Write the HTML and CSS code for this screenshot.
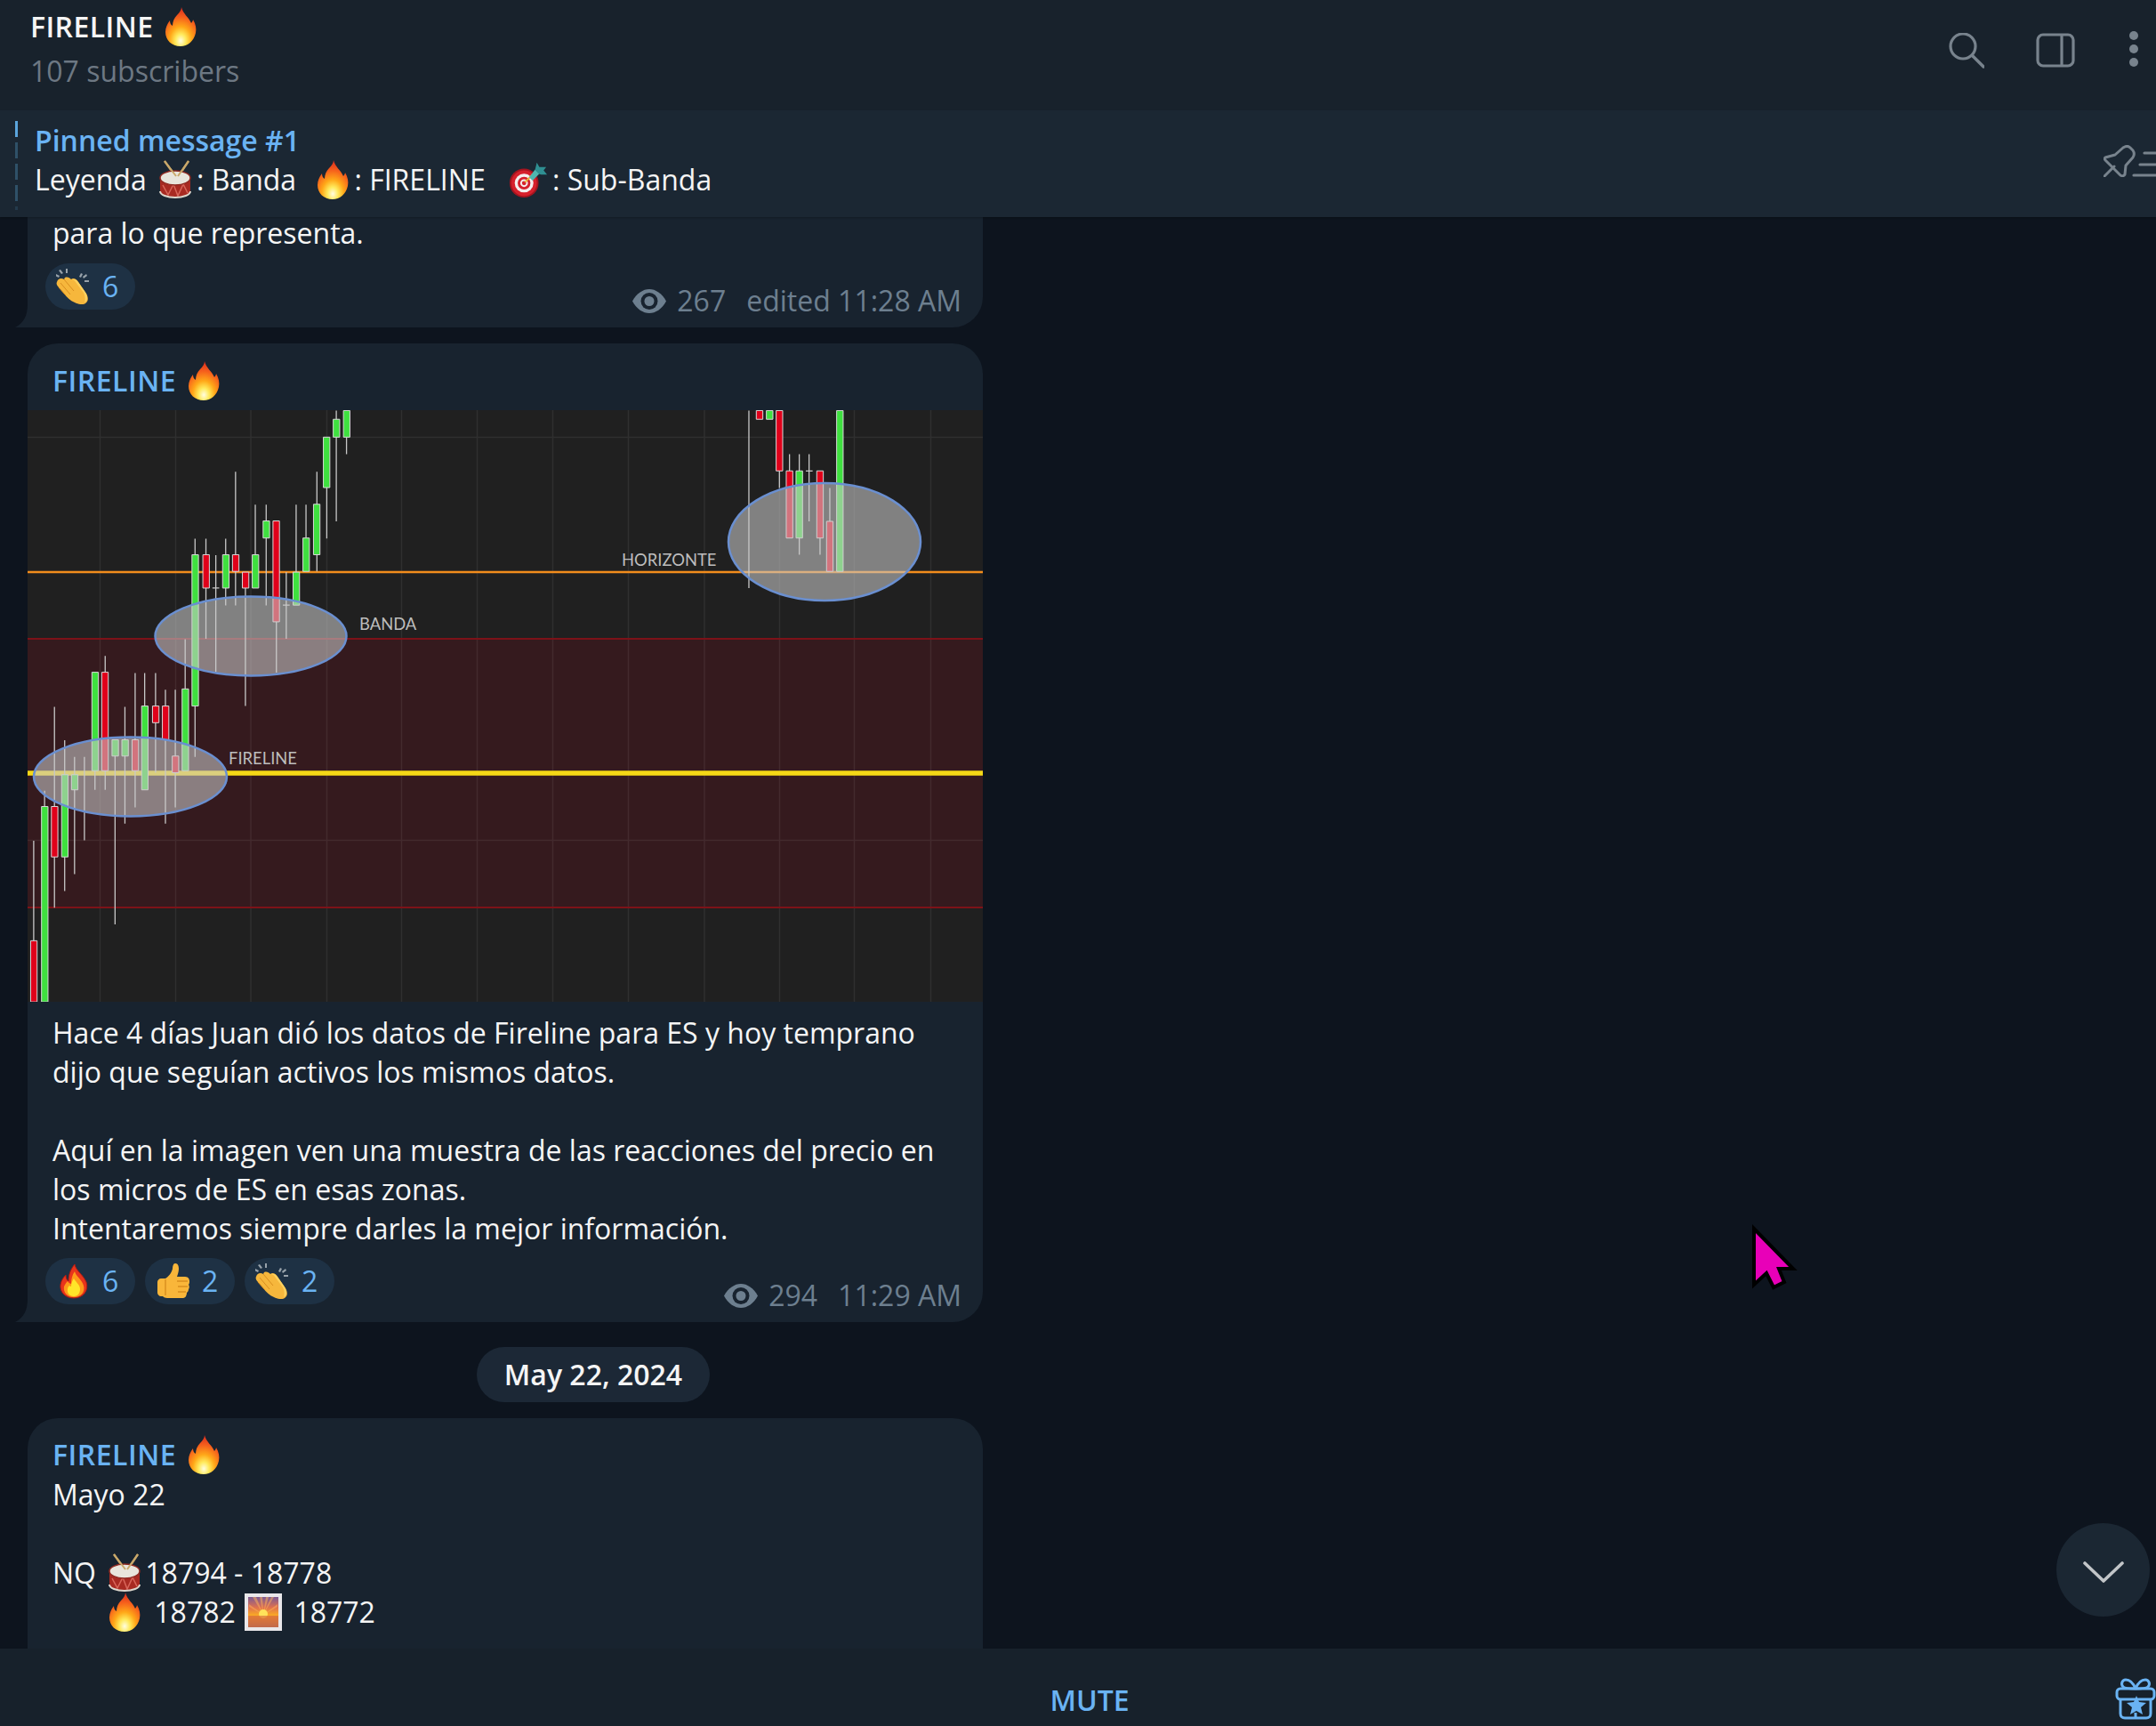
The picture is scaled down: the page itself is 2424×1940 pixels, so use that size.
FILE: index.html
```html
<!DOCTYPE html>
<html lang="en">
<head>
    <meta charset="UTF-8">
    <meta name="viewport" content="width=device-width, initial-scale=1.0">
    <title>FIRELINE</title>
    <link rel="stylesheet" href="styles.css">
</head>
<body>
    <!-- emoji drawings, reused below -->
    <svg class="defs" aria-hidden="true">
        <defs>
            <radialGradient id="flame" cx="0.5" cy="0.86" r="0.86">
                <stop offset="0" stop-color="#fffde0"/>
                <stop offset="0.2" stop-color="#ffea5c"/>
                <stop offset="0.42" stop-color="#ffa818"/>
                <stop offset="0.7" stop-color="#f6601c"/>
                <stop offset="1" stop-color="#d8281f"/>
            </radialGradient>
            <linearGradient id="sky" x1="0" y1="0" x2="0" y2="1">
                <stop offset="0" stop-color="#7b5a94"/>
                <stop offset="0.35" stop-color="#e0714e"/>
                <stop offset="0.6" stop-color="#f9a825"/>
                <stop offset="0.68" stop-color="#ee8a2e"/>
                <stop offset="1" stop-color="#8a5a72"/>
            </linearGradient>
            <symbol id="e-fire" viewBox="0 0 44 44">
                <path fill="url(#flame)" d="M23 0c2 8 8 11 11 18 1-1 2-3 2-4 3 5 4 10 3 15-2 9-9 15-17 15-10 0-17-7-17-16 0-5 2-9 5-13 0 3 1 5 3 6 0-5 2-9 5-12 3-3 5-6 5-9z"/>
            </symbol>
            <symbol id="e-fire-small" viewBox="0 0 40 40">
                <path fill="#e8341c" stroke="#a81c14" stroke-width="1" d="M21 1c1 7 9 11 13 20 3 9-3 18-14 18C10 39 4 32 5 24c1-5 3-8 6-11 0 3 1 6 3 7 0-7 2-13 7-19z"/>
                <path fill="#ff9a1a" d="M21 9c1 5 8 9 10 16 2 7-3 13-11 13S8 32 9 26c1-2 2-4 4-6 1 2 3 3 4 3 0-5 1-10 4-14z"/>
                <path fill="#ffe629" d="M20 17c2 4 7 7 7 12 0 5-3 8-7 8s-8-3-7-8c0-2 1-3 2-4 1 1 2 1 2 1 0-3 1-6 3-9z"/>
            </symbol>
            <symbol id="e-drum" viewBox="0 0 44 44">
                <path d="M10 1l13 18M37 1L25 19" stroke="#c9a86a" stroke-width="2.400" fill="none"/>
                <path fill="#a82a22" d="M5 20v15c0 4 8 7 17 7s17-3 17-7V20z"/>
                <path fill="none" stroke="#d9665a" stroke-width="1.500" d="M8 28l6 11 6-12 5 13 6-13 5 10"/>
                <path fill="none" stroke="#dcd6cc" stroke-width="2" d="M5 35c0 4 8 7 17 7s17-3 17-7"/>
                <ellipse cx="22" cy="20" rx="17" ry="8" fill="#e9e5dc" stroke="#8f2a22" stroke-width="1.500"/>
                <path d="M10 1l13 17M37 1L25 18" stroke="#c9a86a" stroke-width="2" fill="none"/>
            </symbol>
            <symbol id="e-dart" viewBox="0 0 46 44">
                <circle cx="18" cy="26" r="17" fill="#a5141f"/>
                <circle cx="18" cy="26" r="15" fill="#d6202c"/>
                <circle cx="18" cy="26" r="11" fill="#f4eeee"/>
                <circle cx="18" cy="26" r="7.500" fill="#d6202c"/>
                <circle cx="18" cy="26" r="4.500" fill="#f4eeee"/>
                <circle cx="18" cy="26" r="2.500" fill="#d6202c"/>
                <path d="M19 25l9-9" stroke="#e8b33a" stroke-width="2.200"/>
                <path fill="#4fb6b0" d="M24 19l7-9 5 5-8 8z"/>
                <path fill="#2f8f92" d="M31 10l2-8 3 5 8 0-3 4 4 5-7 0-3-1z"/>
            </symbol>
            <symbol id="e-clap" viewBox="0 0 40 40">
                <path fill="#98a2aa" d="M5 1l3 4-2 1-3-4zM11 0h2v5h-2zM0 6l4 2-1 2-4-2zM28 5l2 1-2 4-2-1zM34 6l1 2-4 3-1-2zM37 13v2h-5v-2z"/>
                <path fill="#f6b73c" d="M1 15c1-4 5-5 8-3l1-2c3-1 5 0 7 2l2-1c3 0 5 2 6 4l9 13c3 5 2 9-1 11-3 2-8 1-12-1-5-2-9-6-12-10l-6-7C1 19 0 17 1 15z"/>
                <path fill="#fcd160" d="M17 12c2 0 4 1 5 3l9 12c2 4 2 8 1 11 2-1 3-3 3-5 0-3-1-5-3-8l-7-10c-2-3-5-4-8-3z"/>
                <path fill="none" stroke="#d98e1f" stroke-width="1" d="M9 12l11 13M5 16l11 13M3 21l8 9"/>
            </symbol>
            <symbol id="e-thumb" viewBox="0 0 40 40">
                <path fill="#f9b63a" d="M2 21c0-2 2-4 4-4h5c3-2 7-6 8-11 0-3 1-6 3-6 3 0 4 3 4 6 0 3-1 6-2 9h9c4 0 5 3 5 5 0 1 0 3-1 4 1 1 1 4 0 5 0 2-1 3-2 4 0 2-1 6-4 6H13c-2 0-4-1-5-2H6c-2 0-4-2-4-4z"/>
                <path fill="none" stroke="#d98e1f" stroke-width="1.400" d="M24 20h12M25 26h11M25 32h9M11 18v18"/>
            </symbol>
            <symbol id="e-sunrise" viewBox="0 0 44 44">
                <rect x="1" y="1" width="42" height="42" fill="#e9e7ea"/>
                <rect x="5" y="5" width="34" height="34" fill="url(#sky)"/>
                <path fill="#ffb45a" opacity="0.5" d="M22 25L10 5h4zM22 25L18 5h3zM22 25l3-20h3zM22 25L34 5h-3zM22 25L6 13v3zM22 25l16-12v3z"/>
                <circle cx="22" cy="24" r="5" fill="#ffe25a"/>
                <rect x="5" y="26" width="34" height="13" fill="#d9703c" opacity="0.7"/>
            </symbol>
            <symbol id="i-eye" viewBox="0 0 38 27">
                <path fill="#6d7f8f" d="M0 13.500C5 4.500 12 0 19 0s14 4.500 19 13.500C33 22.500 26 27 19 27S5 22.500 0 13.500z"/>
                <circle cx="19" cy="13.500" r="9.500" fill="#18232f"/>
                <circle cx="19" cy="13.500" r="5.500" fill="#6d7f8f"/>
            </symbol>
        </defs>
    </svg>

    <div class="app">
        <header class="topbar">
            <div class="channel">
                <div class="channel-name">FIRELINE <svg class="emoji"><use href="#e-fire"/></svg></div>
                <div class="channel-subs">107 subscribers</div>
            </div>
            <div class="top-icons">
                <svg class="icon-search" width="40" height="40" viewBox="0 0 40 40"><circle cx="16" cy="15" r="14" fill="none" stroke="#78838d" stroke-width="3.200"/><path d="M27 26l12 12" stroke="#78838d" stroke-width="3.400" stroke-linecap="round"/></svg>
                <svg class="icon-side" width="44" height="39" viewBox="0 0 44 39"><rect x="2" y="2" width="40" height="35" rx="6" fill="none" stroke="#78838d" stroke-width="3.200"/><path d="M29 2v35" stroke="#78838d" stroke-width="3.200"/></svg>
                <svg class="icon-dots" width="10" height="40" viewBox="0 0 10 40"><circle cx="5" cy="5" r="5" fill="#78838d"/><circle cx="5" cy="20" r="5" fill="#78838d"/><circle cx="5" cy="35" r="5" fill="#78838d"/></svg>
            </div>
        </header>

        <div class="pinned">
            <div class="pin-marks">
                <span class="on"></span><span></span><span></span><span></span><span class="last"></span>
            </div>
            <div class="pin-text">
                <div class="pin-title">Pinned message #1</div>
                <div class="pin-body">Leyenda <svg class="emoji e-drum-pin"><use href="#e-drum"/></svg>: Banda <svg class="emoji e-fire-pin"><use href="#e-fire"/></svg>: FIRELINE <svg class="emoji e-dart-pin"><use href="#e-dart"/></svg>: Sub-Banda</div>
            </div>
            <svg class="pin-icon" width="59" height="36" viewBox="0 0 59 36">
                <path fill="none" stroke="#78838d" stroke-width="3" stroke-linejoin="round" d="M2 14l11-3 9-8c3-2 6-2 8 0l3 3c2 3 2 5 0 8l-8 9-1 10c-1 2-3 2-5 1L2 17c-1-1-1-2 0-3z"/>
                <path d="M1 35l11-11" stroke="#78838d" stroke-width="3" stroke-linecap="round"/>
                <path d="M46 9h13M41 22h18M34 34h25" stroke="#78838d" stroke-width="3.200" stroke-linecap="round"/>
            </svg>
        </div>

        <main class="chat">
            <article class="bubble bubble-cut">
                <p class="msg-text">para lo que representa.</p>
                <div class="msg-foot">
                    <div class="reactions">
                        <span class="reaction"><svg class="emoji-small"><use href="#e-clap"/></svg>6</span>
                    </div>
                    <div class="meta">
                        <svg class="eye"><use href="#i-eye"/></svg>
                        <span>267</span>
                        <span class="meta-time">edited 11:28 AM</span>
                    </div>
                </div>
                <svg class="tail" width="14" height="26" viewBox="0 0 14 26"><path d="M14 0c0 12-4 21-14 26h14z"/></svg>
            </article>

            <article class="bubble">
                <div class="msg-name">FIRELINE <svg class="emoji"><use href="#e-fire"/></svg></div>
                <svg class="chart" width="1074" height="665" viewBox="0 0 1074 665">
                    <rect width="1074" height="665" fill="#202020"/>
                    <rect y="257" width="1074" height="302" fill="#351a1e"/>
                    <path class="grid" d="M81.500 0v665M166.500 0v665M251 0v665M336.500 0v665M420.500 0v665M505.500 0v665M590.500 0v665M675.500 0v665M761 0v665M845.500 0v665M929.500 0v665M1015.500 0v665M0 30.500h1074M0 483.500h1074"/>
                    <path class="band-line" d="M0 257h1074M0 559h1074"/>
                    <path class="line-orange" d="M0 182h1074"/>
                    <path class="line-yellow" d="M0 408h1074"/>

                    <!-- left cluster, coordinates read off the picture -->
                    <g transform="translate(-31 -21) scale(.3827 .4464)">
                        <path class="wick" d="M99 1131V1383M131 1005V1045M160 794V1300M190 878V1258M219 920V1215M248 920V1130M279 955V1003M309 666V1003M338 918V1342M367 794V1088M397 709V1047M425 709V792M457 709V960M486 751V1088M515 751V1047M544 624V749M573 371V920M605 371V623M634 412V707M663 371V539M692 202V539M721 495V792M750 285V411M782 285V539M812 580V708M841 455V623M870 285V455M899 285V369M931 202V453M960 242V370M988 48V327M1018 115V158M624 495H644M831 538H851"/>
                        <g class="down">
                            <rect x="90" y="1383" width="19" height="154"/><rect x="151" y="1045" width="19" height="127"/><rect x="299" y="707" width="19" height="248"/><rect x="388" y="877" width="19" height="78"/><rect x="448" y="792" width="19" height="42"/><rect x="477" y="792" width="19" height="85"/><rect x="506" y="918" width="19" height="42"/><rect x="596" y="411" width="19" height="84"/><rect x="683" y="411" width="19" height="42"/><rect x="712" y="455" width="19" height="40"/><rect x="802" y="326" width="19" height="254"/>
                        </g>
                        <g class="up">
                            <rect x="122" y="1045" width="19" height="492"/><rect x="181" y="965" width="19" height="207"/><rect x="210" y="965" width="19" height="38"/><rect x="270" y="707" width="19" height="248"/><rect x="329" y="877" width="19" height="41"/><rect x="358" y="877" width="19" height="41"/><rect x="416" y="792" width="19" height="211"/><rect x="535" y="749" width="19" height="206"/><rect x="564" y="411" width="19" height="381"/><rect x="654" y="411" width="19" height="84"/><rect x="741" y="411" width="19" height="84"/><rect x="773" y="326" width="19" height="43"/><rect x="861" y="455" width="19" height="83"/><rect x="890" y="369" width="19" height="84"/><rect x="921" y="284" width="19" height="127"/><rect x="950" y="115" width="19" height="127"/><rect x="979" y="70" width="19" height="45"/><rect x="1009" y="48" width="19" height="67"/>
                        </g>
                    </g>

                    <!-- right cluster -->
                    <g transform="translate(569 -21) scale(.3333 .4464)">
                        <path class="wick" d="M726 48V495M829 200V243M863 158V200M896 158V411M929 158V327M966 369V411M999 243V327M918 200H941"/>
                        <g class="down">
                            <rect x="751" y="48" width="22" height="22"/><rect x="818" y="48" width="22" height="152"/><rect x="852" y="200" width="22" height="169"/><rect x="955" y="200" width="22" height="169"/><rect x="988" y="327" width="22" height="126"/>
                        </g>
                        <g class="up">
                            <rect x="785" y="48" width="22" height="22"/><rect x="885" y="200" width="22" height="169"/><rect x="1022" y="48" width="22" height="405"/>
                        </g>
                    </g>

                    <ellipse class="zone" cx="115.500" cy="412" rx="108.500" ry="44.500"/>
                    <ellipse class="zone" cx="251" cy="254" rx="107.500" ry="44.500"/>
                    <ellipse class="zone" cx="896" cy="148" rx="108" ry="66"/>
                    <text class="chart-label" x="373" y="247">BANDA</text>
                    <text class="chart-label" x="226" y="398">FIRELINE</text>
                    <text class="chart-label" x="668" y="175">HORIZONTE</text>
                </svg>
                <p class="msg-text msg-caption">Hace 4 días Juan dió los datos de Fireline para ES y hoy temprano<br>dijo que seguían activos los mismos datos.<br><br>Aquí en la imagen ven una muestra de las reacciones del precio en<br>los micros de ES en esas zonas.<br>Intentaremos siempre darles la mejor información.</p>
                <div class="msg-foot">
                    <div class="reactions">
                        <span class="reaction"><svg class="emoji-small"><use href="#e-fire-small"/></svg>6</span>
                        <span class="reaction"><svg class="emoji-small"><use href="#e-thumb"/></svg>2</span>
                        <span class="reaction"><svg class="emoji-small"><use href="#e-clap"/></svg>2</span>
                    </div>
                    <div class="meta">
                        <svg class="eye"><use href="#i-eye"/></svg>
                        <span>294</span>
                        <span class="meta-time">11:29 AM</span>
                    </div>
                </div>
                <svg class="tail" width="14" height="26" viewBox="0 0 14 26"><path d="M14 0c0 12-4 21-14 26h14z"/></svg>
            </article>

            <div class="date-row"><span class="date-pill">May 22, 2024</span></div>

            <article class="bubble bubble-last">
                <div class="msg-name">FIRELINE <svg class="emoji"><use href="#e-fire"/></svg></div>
                <p class="msg-text">Mayo 22<br><br>NQ <svg class="emoji e-drum-nq"><use href="#e-drum"/></svg>18794 - 18778<br><span class="indent"></span><svg class="emoji e-fire-nq"><use href="#e-fire"/></svg> 18782 <svg class="emoji e-sun"><use href="#e-sunrise"/></svg> 18772</p>
            </article>

            <button class="scroll-down" type="button" aria-label="Scroll down">
                <svg width="46" height="25" viewBox="0 0 46 25"><path d="M2 2l21 20L44 2" fill="none" stroke="#c2c5c8" stroke-width="3.600" stroke-linecap="round" stroke-linejoin="round"/></svg>
            </button>
            <svg class="cursor" width="54" height="78" viewBox="0 0 54 78"><path d="M3 5l44 45H31l6 15-12 6-8-16-14 13z" fill="#e800b8" stroke="#000" stroke-width="4"/></svg>
        </main>

        <footer class="footer">
            <span class="mute">MUTE</span>
            <svg class="gift" width="46" height="47" viewBox="0 0 46 47">
                <g fill="none" stroke="#6ab3f3" stroke-width="3" stroke-linejoin="round">
                    <path d="M23 12c-3-7-7-10-11-10-4 0-6 5-3 8 2 2 8 2 14 2zM23 12c3-7 7-10 11-10 4 0 6 5 3 8-2 2-8 2-14 2z"/>
                    <rect x="2" y="12" width="42" height="12" rx="4"/>
                    <path d="M6 24v16c0 3 2 5 5 5h24c3 0 5-2 5-5V24M23 39v6"/>
                </g>
                <path fill="#6ab3f3" d="M24 20l3 7 8 1-6 5 2 8-7-4-7 4 2-8-6-5 8-1z"/>
            </svg>
        </footer>
    </div>
</body>
</html>
```

FILE: styles.css
```css
html, body {
    margin: 0;
    padding: 0;
    height: 100%;
    background-color: #0d141e;
    overflow: hidden;
}
body {
    font-family: "Open Sans", "Noto Sans", sans-serif;
    font-size: 32px;
    line-height: 44px;
    color: #f5f5f5;
}
.defs {
    position: absolute;
    width: 0;
    height: 0;
}
.app {
    display: flex;
    flex-direction: column;
    height: 100vh;
}

/* top bar */
.topbar {
    flex: 0 0 124px;
    display: flex;
    justify-content: space-between;
    background-color: #18222c;
    box-sizing: border-box;
    padding: 8px 20px 0 34px;
}
.channel-name {
    font-weight: 600;
    letter-spacing: 0.4px;
    white-space: pre;
}
.channel-subs {
    margin-top: 6px;
    color: #6d7883;
}
.top-icons {
    display: flex;
    align-items: flex-start;
    padding-top: 29px;
}
.icon-side {
    margin-left: 58px;
}
.icon-dots {
    margin-left: 61px;
    margin-top: -2px;
}
.emoji {
    width: 44px;
    height: 44px;
    vertical-align: -10px;
}

/* pinned message */
.pinned {
    flex: 0 0 120px;
    display: flex;
    background-color: #1b2733;
    box-sizing: border-box;
    padding: 12px 0 0 17px;
    position: relative;
    z-index: 1;
    box-shadow: 0 1px 2px rgba(0, 0, 0, 0.25);
}
.pin-marks {
    display: flex;
    flex-direction: column;
    gap: 6px;
    width: 3px;
}
.pin-marks span {
    display: block;
    width: 3px;
    height: 18px;
    background-color: #2f5168;
}
.pin-marks .on {
    background-color: #5ba5dc;
}
.pin-marks .last {
    height: 4px;
    background-color: #243a4c;
}
.pin-text {
    margin-left: 19px;
    flex: 1;
}
.pin-title {
    color: #6ab3f3;
    font-weight: 600;
}
.pin-body {
    white-space: pre;
}
.pin-icon {
    margin-top: 27px;
    flex: none;
}
.e-drum-pin {
    margin-left: 2px;
    margin-right: 2px;
}
.e-fire-pin {
    margin-left: 11px;
    margin-right: 2px;
}
.e-dart-pin {
    margin-left: 18px;
    margin-right: 5px;
}

/* chat */
.chat {
    flex: 1;
    position: relative;
    overflow: hidden;
    padding-left: 31px;
}
.bubble {
    position: relative;
    width: 1074px;
    background-color: #18232f;
    border-radius: 34px 34px 34px 0;
    margin-top: 18px;
}
.bubble-cut {
    margin-top: 0;
    border-top-left-radius: 0;
    border-top-right-radius: 0;
}
.bubble-cut .msg-text {
    line-height: 36px;
    padding-bottom: 4px;
}
.bubble-cut .msg-foot {
    padding-top: 12px;
}
.bubble-last {
    margin-top: 18px;
    border-radius: 34px 34px 0 0;
    padding: 19px 0 60px;
}
.tail {
    position: absolute;
    left: -14px;
    bottom: 0;
    fill: #18232f;
}
.msg-name {
    color: #6ab3f3;
    font-weight: 600;
    letter-spacing: 0.5px;
    padding: 20px 28px 0;
    white-space: pre;
}
.bubble-last .msg-name {
    padding-top: 0;
}
.chart {
    display: block;
    margin-top: 11px;
}
.msg-text {
    margin: 0;
    padding: 0 28px;
    white-space: pre-wrap;
}
.bubble-last .msg-text {
    padding-top: 1px;
}
.msg-caption {
    padding-top: 13px;
}
.indent {
    display: inline-block;
    width: 59px;
}
.e-drum-nq {
    margin-left: 2px;
    margin-right: 1px;
}
.e-fire-nq {
    margin-right: 3px;
}
.e-sun {
    margin-left: 1px;
    margin-right: 4px;
}
.msg-foot {
    display: flex;
    justify-content: space-between;
    align-items: flex-end;
    padding: 11px 24px 8px 20px;
}
.reactions {
    display: flex;
    gap: 11px;
    margin-bottom: 12px;
}
.reaction {
    display: flex;
    align-items: center;
    box-sizing: border-box;
    width: 101px;
    height: 52px;
    padding-left: 12px;
    border-radius: 26px;
    background-color: #1e3144;
    color: #6ab3f3;
    font-weight: 500;
}
.emoji-small {
    width: 40px;
    height: 40px;
    margin-right: 12px;
}
.meta {
    display: flex;
    align-items: center;
    color: #6d7f8f;
}
.eye {
    width: 38px;
    height: 27px;
    margin-right: 12px;
}
.meta-time {
    margin-left: 23px;
}
.date-row {
    display: flex;
    justify-content: center;
    width: 1272px;
    margin-top: 28px;
}
.date-pill {
    padding: 9px 31px;
    border-radius: 31px;
    background-color: #1c2836;
    font-weight: 600;
}
.scroll-down {
    position: absolute;
    left: 2312px;
    top: 1468px;
    width: 105px;
    height: 105px;
    padding: 6px 0 0;
    border: none;
    border-radius: 50%;
    background-color: #1b2733;
    display: flex;
    align-items: center;
    justify-content: center;
}
.cursor {
    position: absolute;
    left: 1969px;
    top: 1132px;
}

/* chart parts */
.grid {
    stroke: rgba(255, 255, 255, 0.07);
    stroke-width: 1.5;
    fill: none;
}
.band-line {
    stroke: #7d1218;
    stroke-width: 2;
    fill: none;
}
.line-orange {
    stroke: #f28c1c;
    stroke-width: 2.5;
}
.line-yellow {
    stroke: #f5d816;
    stroke-width: 5.5;
}
.wick {
    stroke: #c8c8c8;
    stroke-width: 1.3;
    fill: none;
    vector-effect: non-scaling-stroke;
}
.up rect, .down rect {
    stroke: #d9d9d9;
    stroke-width: 1;
    vector-effect: non-scaling-stroke;
}
.up rect {
    fill: #3fe03f;
}
.down rect {
    fill: #e0001a;
}
.zone {
    fill: rgba(200, 200, 200, 0.58);
    stroke: #6a8fd0;
    stroke-width: 2.5;
}
.chart-label {
    font-family: Lato, "Open Sans", sans-serif;
    font-size: 18.4px;
    fill: #bdbdbd;
}

/* bottom bar */
.footer {
    flex: 0 0 87px;
    display: flex;
    align-items: center;
    box-sizing: border-box;
    padding: 0 0 0 72px;
    background-color: #17212b;
    position: relative;
}
.mute {
    flex: 1;
    text-align: center;
    color: #6ab3f3;
    font-weight: 600;
    padding-top: 29px;
}
.gift {
    flex: none;
    margin-top: 25px;
}
```
